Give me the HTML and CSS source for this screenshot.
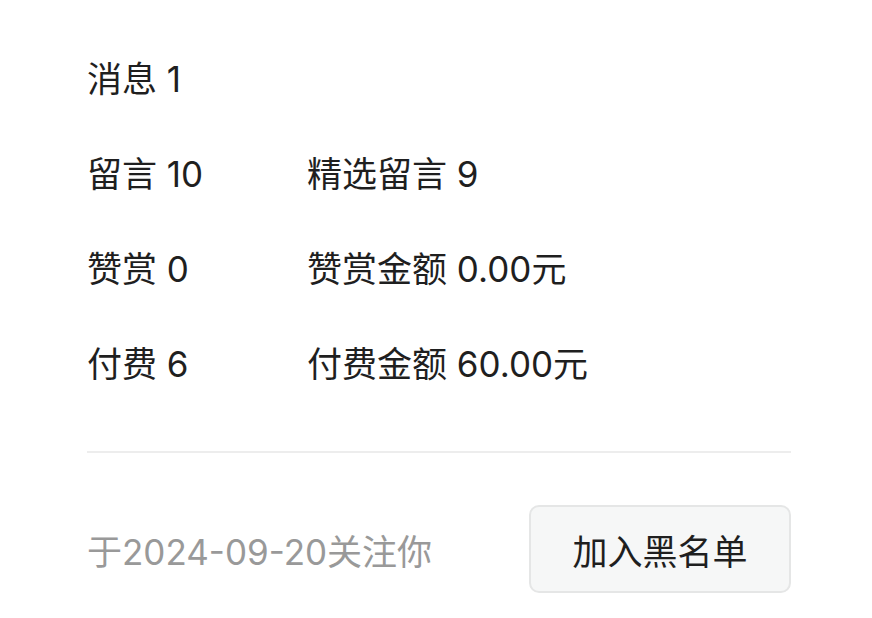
FILE: index.html
```html
<!DOCTYPE html>
<html lang="zh-CN">

<head>
    <meta charset="UTF-8">
    <meta name="viewport" content="width=device-width, initial-scale=1.0">
    <title>用户详情</title>
    <link rel="stylesheet" href="styles.css">
</head>

<body>
    <div class="panel">
        <div class="stats">
            <div class="row">
                <span>消息 1</span>
            </div>
            <div class="row">
                <span>留言 10</span>
                <span>精选留言 9</span>
            </div>
            <div class="row">
                <span>赞赏 0</span>
                <span>赞赏金额 0.00元</span>
            </div>
            <div class="row">
                <span>付费 6</span>
                <span>付费金额 60.00元</span>
            </div>
        </div>
        <div class="footer">
            <span class="since">于2024-09-20关注你</span>
            <button class="block-btn" type="button">加入黑名单</button>
        </div>
    </div>
</body>

</html>
```

FILE: styles.css
```css
* {
    box-sizing: border-box;
}

body {
    margin: 0;
    background-color: #fff;
    font-family: Inter, "Noto Sans CJK SC", sans-serif;
    color: #1f1f1f;
}

.panel {
    width: 704px;
    margin-left: 87px;
    padding-top: 55px;
}

.stats {
    display: flex;
    flex-direction: column;
    gap: 47px;
    padding-bottom: 63px;
    border-bottom: 2px solid #ededed;
}

.row {
    display: grid;
    grid-template-columns: 220px auto;
    font-size: 35px;
    line-height: 48px;
    height: 48px;
}

.footer {
    display: flex;
    justify-content: space-between;
    align-items: center;
    padding-top: 52px;
}

.since {
    font-size: 35px;
    color: #999;
}

.block-btn {
    width: 262px;
    height: 88px;
    border: 2px solid #e5e6e6;
    border-radius: 10px;
    background-color: #f6f7f7;
    font-family: Inter, "Noto Sans CJK SC", sans-serif;
    font-size: 35px;
    color: #1f1f1f;
    cursor: pointer;
}
```
